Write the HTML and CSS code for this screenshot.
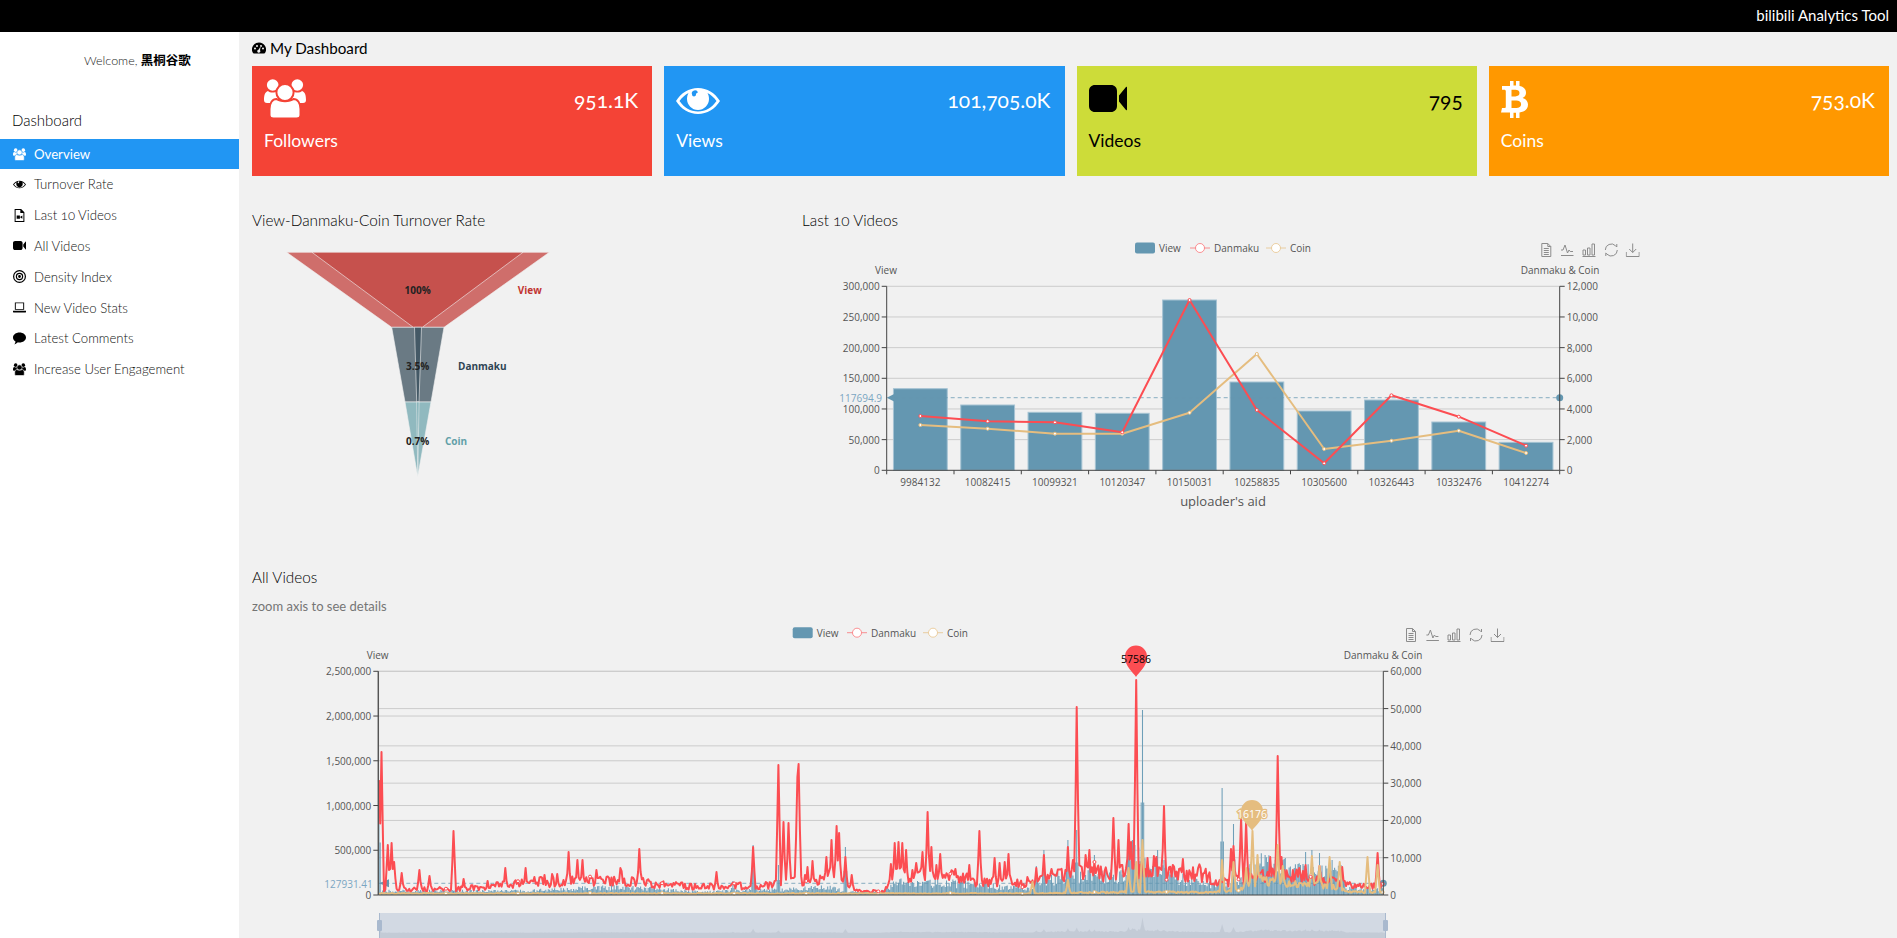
FILE: index.html
```html
<!DOCTYPE html>
<html lang="en">
<head>
  <meta charset="UTF-8">
  <title>bilibili Analytics Tool</title>
  <link rel="stylesheet" href="styles.css">
</head>
<body>
  <svg class="icon-defs" width="0" height="0">
    <symbol id="i-users" viewBox="0 0 42 40">
      <circle cx="8.7" cy="6" r="5.8"/>
      <circle cx="33.3" cy="6" r="5.8"/>
      <path d="M0 21c0-5 1-8 4-9 2 2 7 2 9 0l6 3-9 9H3c-2 0-3-1-3-3zM42 21c0-5-1-8-4-9-2 2-7 2-9 0l-6 3 9 9h7c2 0 3-1 3-3z"/>
      <circle class="gap" cx="21" cy="13.5" r="8.6"/>
      <path class="gap" d="M5.5 36V30c0-6 3-10 7-10 4 3 13 3 17 0 4 0 7 4 7 10v6c0 2-2 3.5-4 3.5H9.500c-2 0-4-1.500-4-3.500z"/>
    </symbol>
    <symbol id="i-eye" viewBox="0 0 44 26">
      <path fill-rule="evenodd" d="M0 13C5 5 13 0 22 0s17 5 22 13c-5 8-13 13-22 13S5 21 0 13zm3.500 0C8 19.500 14.500 23.500 22 23.500S36 19.500 40.500 13C38 9.500 35 7 31.500 5c1 1.800 1.500 3.800 1.500 6 0 6-5 11-11 11s-11-5-11-11c0-2.200.5-4.200 1.500-6C9 7 6 9.500 3.500 13zM22 4.500a2 2 0 0 0-6 2 2 2 0 0 0 4 0c0-1 .8-2 2-2z"/>
    </symbol>
    <symbol id="i-video" viewBox="0 0 38 27">
      <path d="M6 0h16c3.500 0 6 2.500 6 6v15c0 3.500-2.500 6-6 6H6c-3.500 0-6-2.500-6-6V6c0-3.500 2.500-6 6-6zM30 10.500 37 2c.5-.5 1-.3 1 .5v22c0 .8-.5 1-1 .5l-7-8.500z"/>
    </symbol>
    <symbol id="i-file" viewBox="0 0 12 16">
      <path fill-rule="evenodd" d="M0 0h8l4 4v12H0zM1.200 1.200v13.600h9.600V5H7V1.200zM2.500 8h4v4h-4zM7 9.500 9.500 8v4L7 10.500z"/>
    </symbol>
    <symbol id="i-target" viewBox="0 0 14 14">
      <path fill-rule="evenodd" d="M7 0a7 7 0 1 1 0 14A7 7 0 0 1 7 0zm0 1.300a5.700 5.700 0 1 0 0 11.400A5.700 5.700 0 0 0 7 1.300zm0 1.700a4 4 0 1 1 0 8 4 4 0 0 1 0-8zm0 1.300a2.700 2.700 0 1 0 0 5.400 2.700 2.700 0 0 0 0-5.400zM7 5.500a1.500 1.500 0 1 1 0 3 1.500 1.500 0 0 1 0-3z"/>
    </symbol>
    <symbol id="i-laptop" viewBox="0 0 14 11">
      <path fill-rule="evenodd" d="M2 0h10v8H2zm1 1v6h8V1zM0 9h14v1c0 .6-.4 1-1 1H1c-.6 0-1-.4-1-1z"/>
    </symbol>
    <symbol id="i-comment" viewBox="0 0 14 13">
      <path d="M7 0c3.900 0 7 2.400 7 5.400s-3.100 5.400-7 5.400c-.6 0-1.200 0-1.700-.2C4.200 11.700 2.800 12.500 1.500 13c.7-1 1.100-2 1.200-3.200C1 8.800 0 7.200 0 5.400 0 2.400 3.100 0 7 0z"/>
    </symbol>
    <symbol id="i-gauge" viewBox="0 0 14 12">
      <path fill-rule="evenodd" d="M7 0a7 7 0 0 1 6 10.600c-.2.300-.5.400-.8.400H1.800c-.3 0-.6-.1-.8-.4A7 7 0 0 1 7 0zM3 5a1 1 0 1 0 0 2 1 1 0 0 0 0-2zm2-2.500a1 1 0 1 0 0 2 1 1 0 0 0 0-2zm4 0a1 1 0 1 0 0 2 1 1 0 0 0 0-2zM11 5a1 1 0 1 0 0 2 1 1 0 0 0 0-2zM8.700 3.800 6.500 7.200a1.500 1.500 0 1 0 1.500.6z"/>
    </symbol>
    <symbol id="i-coin" viewBox="0 0 27 37">
      <path fill-rule="evenodd" d="M9 0h3.500v4.600H15V0h3.500v5c4 .8 6.500 3 6.500 6.700 0 2.400-1.200 4.300-3.400 5.200 3.300.9 5.400 3.200 5.400 6.700 0 4.700-3.300 7.300-8.500 7.900V37H15v-5.300h-2.500V37H9v-5.400H0l1-4.600h2.500c.9 0 1.300-.5 1.300-1.300V10.200c0-1-.6-1.500-1.600-1.500H1V4.900h8zm1.500 8.700v6.700h3.800c2.500 0 4.200-1 4.200-3.300 0-2.400-1.700-3.400-4.200-3.400zm0 10.800v7.400h4.800c2.800 0 4.800-1.200 4.800-3.700s-2-3.700-4.800-3.700z"/>
    </symbol>
    <symbol id="t-data" viewBox="0 0 14 14">
      <path d="M2.500.5h6l3 3v10h-9zM8.500.5v3h3M4.500 5.500h5M4.500 7.500h5M4.500 9.500h5M4.500 11.500h5"/>
    </symbol>
    <symbol id="t-line" viewBox="0 0 14 14">
      <path d="M1 7h2l2-5 2.500 8L9 7l1.200 1.500H13M1 12.500h12.500"/>
    </symbol>
    <symbol id="t-bar" viewBox="0 0 14 14">
      <path d="M1 7h2.500v5H1zM5.500 5H8v7H5.500zM10 1h2.500v11H10zM.5 13.500h13"/>
    </symbol>
    <symbol id="t-restore" viewBox="0 0 14 14">
      <path d="M1 7a6 6 0 0 1 10.300-4.200L12.500 4V1M13 7A6 6 0 0 1 2.700 11.200L1.500 10v3"/>
    </symbol>
    <symbol id="t-save" viewBox="0 0 14 14">
      <path d="M7 .5v9M3.500 6 7 9.500 10.500 6M.5 9v4.500h13V9"/>
    </symbol>
  </svg>

  <div class="topbar">bilibili Analytics Tool</div>

  <div class="layout">
    <aside class="sidebar">
      <div class="welcome">Welcome, <strong>黑桐谷歌</strong></div>
      <h5 class="side-title">Dashboard</h5>
      <nav class="side-nav">
        <a class="active" href="#"><svg class="nav-icon"><use href="#i-users"/></svg>Overview</a>
        <a href="#"><svg class="nav-icon"><use href="#i-eye"/></svg>Turnover Rate</a>
        <a href="#"><svg class="nav-icon"><use href="#i-file"/></svg>Last 10 Videos</a>
        <a href="#"><svg class="nav-icon"><use href="#i-video"/></svg>All Videos</a>
        <a href="#"><svg class="nav-icon"><use href="#i-target"/></svg>Density Index</a>
        <a href="#"><svg class="nav-icon"><use href="#i-laptop"/></svg>New Video Stats</a>
        <a href="#"><svg class="nav-icon"><use href="#i-comment"/></svg>Latest Comments</a>
        <a href="#"><svg class="nav-icon"><use href="#i-users"/></svg>Increase User Engagement</a>
      </nav>
    </aside>

    <main class="content">
      <h5 class="page-title"><svg class="title-icon"><use href="#i-gauge"/></svg>My Dashboard</h5>

      <div class="cards">
        <div class="card card-red">
          <div class="card-top"><svg class="card-icon icon-users"><use href="#i-users"/></svg><span class="card-num">951.1K</span></div>
          <div class="card-label">Followers</div>
        </div>
        <div class="card card-blue">
          <div class="card-top"><svg class="card-icon icon-eye"><use href="#i-eye"/></svg><span class="card-num">101,705.0K</span></div>
          <div class="card-label">Views</div>
        </div>
        <div class="card card-lime">
          <div class="card-top"><svg class="card-icon icon-video"><use href="#i-video"/></svg><span class="card-num">795</span></div>
          <div class="card-label">Videos</div>
        </div>
        <div class="card card-orange">
          <div class="card-top"><svg class="card-icon icon-coin"><use href="#i-coin"/></svg><span class="card-num">753.0K</span></div>
          <div class="card-label">Coins</div>
        </div>
      </div>

      <div class="chart-row">
        <section class="col-funnel">
          <h5 class="section-title">View-Danmaku-Coin Turnover Rate</h5>
          <svg class="chart funnel-chart" viewBox="252 235 550 285">
            <polygon class="fn-view-o" points="286.700,252.300 549.300,252.300 444,327.300 391.700,327.300"/>
            <polygon class="fn-view-i" points="312,252.300 523,252.300 422.300,327.300 413.300,327.300"/>
            <polygon class="fn-dan-o" points="391.700,327.300 444,327.300 431,402 405,402"/>
            <polygon class="fn-dan-i" points="414.500,327.300 421.500,327.300 419,402 416.700,402"/>
            <polygon class="fn-coin-o" points="405,402 431,402 417.700,476.700"/>
            <polygon class="fn-coin-i" points="416.700,402 419,402 417.800,476.700"/>
            <text class="fn-num" x="417.700" y="290">100%</text>
            <text class="fn-num" x="417.700" y="366">3.5%</text>
            <text class="fn-num" x="417.700" y="441">0.7%</text>
            <text class="fn-label lbl-view" x="517.700" y="290">View</text>
            <text class="fn-label lbl-dan" x="458" y="366">Danmaku</text>
            <text class="fn-label lbl-coin" x="445" y="441">Coin</text>
          </svg>
        </section>
        <section class="col-bars">
          <h5 class="section-title">Last 10 Videos</h5>
          <svg class="chart bar-chart" id="barChart" viewBox="802 235 1087 285"></svg>
        </section>
      </div>

      <section class="all-videos">
        <h5 class="section-title">All Videos</h5>
        <p class="section-note">zoom axis to see details</p>
        <svg class="chart big-chart" id="bigChart" viewBox="252 620 1637 318"></svg>
      </section>
    </main>
  </div>

  <script src="charts.js"></script>
</body>
</html>
```

FILE: styles.css
```css
* { margin: 0; padding: 0; box-sizing: border-box; }
html, body { height: 100%; overflow: hidden; }
body {
  font-family: Lato, "Noto Sans CJK SC", sans-serif;
  font-variant-numeric: oldstyle-nums;
  font-weight: 300;
  background: #f1f1f1;
  color: #000;
}
.icon-defs { position: absolute; }

.topbar {
  height: 32px;
  line-height: 30px;
  background: #000;
  color: #fff;
  text-align: right;
  padding-right: 8px;
  font-size: 15px;
  font-weight: 400;
}

.layout { display: flex; height: calc(100% - 32px); }

.sidebar {
  width: 239px;
  flex: none;
  background: #fff;
  --gap: #fff;
}
.welcome {
  height: 56px;
  padding: 18px 0 0 84px;
  font-size: 12.500px;
  line-height: 20px;
  color: #222;
}
.welcome strong { color: #000; font-size: 12.500px; font-weight: 700; font-family: "Noto Sans CJK SC", sans-serif; }
.side-title {
  height: 51px;
  padding: 22px 0 0 12px;
  font-size: 15px;
  line-height: 20px;
  font-weight: 300;
  color: #000;
}
.side-nav a {
  display: flex;
  align-items: center;
  height: 30.800px;
  padding-left: 13px;
  color: #111;
  text-decoration: none;
  font-size: 13.200px;
}
.side-nav a.active { background: #2196f3; color: #fff; --gap: #2196f3; height: 30px; font-weight: 400; }
.nav-icon { width: 13px; height: 13px; margin-right: 8px; fill: #000; flex: none; }
.active .nav-icon { fill: #fff; }
.gap { stroke: var(--gap); stroke-width: 2; }

.content { flex: 1; min-width: 0; padding: 0 8px 0 13px; overflow: hidden; }

.page-title {
  display: flex;
  align-items: center;
  height: 34px;
  padding-bottom: 2px;
  font-size: 15.200px;
  font-weight: 400;
}
.title-icon { width: 14px; height: 13px; margin-right: 4px; fill: #000; }

.cards { display: grid; grid-template-columns: repeat(4, 1fr); gap: 12px; }
.card { height: 110px; padding: 13px 14px 0 12px; color: #fff; --gap: #f44336; }
.card-red { background: #f44336; }
.card-blue { background: #2196f3; --gap: #2196f3; }
.card-lime { background: #cddc39; color: #000; --gap: #cddc39; }
.card-orange { background: #ff9800; --gap: #ff9800; }
.card-top { display: flex; justify-content: space-between; align-items: flex-start; height: 44px; }
.card-icon { fill: currentColor; display: block; }
.icon-users { width: 42px; height: 40px; }
.icon-eye { width: 44px; height: 26px; margin-top: 9px; }
.icon-video { width: 38px; height: 27px; margin-top: 6px; }
.icon-coin { width: 27px; height: 37px; margin-top: 2px; }
.card-num { font-size: 21px; line-height: 26px; margin-top: 8px; font-weight: 400; }
.card-label { font-size: 17.500px; line-height: 24px; margin-top: 6px; font-weight: 400; }

.chart-row { display: flex; margin-top: 34px; }
.col-funnel { width: 550px; flex: none; }
.col-bars { flex: 1; min-width: 0; }
.section-title { font-size: 15.300px; line-height: 20px; font-weight: 300; color: #000; height: 25px; }
.chart { display: block; font-variant-numeric: normal; }
.funnel-chart { width: 550px; height: 285px; }
.bar-chart { width: 1087px; height: 285px; }

.all-videos { margin-top: 47px; }
.all-videos .section-title { height: 20px; }
.section-note { font-size: 13px; line-height: 18px; margin-top: 10px; color: #757575; height: 23px; font-weight: 400; }
.big-chart { width: 1637px; height: 318px; }

/* funnel */
.funnel-chart polygon { stroke: #f1f1f1; stroke-width: 1; stroke-opacity: .6; }
.fn-view-o { fill: #cf6e6b; }
.fn-view-i { fill: #c6514d; }
.fn-dan-o { fill: #6a7a84; }
.fn-dan-i { fill: #445966; }
.fn-coin-o { fill: #90b9bf; }
.fn-coin-i { fill: #79acb3; }
.fn-num { font: 700 10px "Open Sans", sans-serif; fill: #222; text-anchor: middle; dominant-baseline: central; }
.fn-label { font: 700 10px "Open Sans", sans-serif; dominant-baseline: central; }
.lbl-view { fill: #c23531; }
.lbl-dan { fill: #2f4554; }
.lbl-coin { fill: #61a0a8; }

/* shared chart parts */
.chart text { font-family: "Open Sans", sans-serif; font-variant-numeric: lining-nums; font-weight: 400; }
.chart .fn-num, .chart .fn-label { font-weight: 700; }
.tick { font-size: 10px; fill: #555; dominant-baseline: central; }
.t-end { text-anchor: end; }
.t-mid { text-anchor: middle; }
.axis-name { font-size: 10px; fill: #555; text-anchor: middle; dominant-baseline: central; }
.x-name { font-size: 13px; fill: #555; text-anchor: middle; dominant-baseline: central; }
.legend-text { font-size: 10px; fill: #555; dominant-baseline: central; }
.mean-label { font-size: 10px; fill: #7ba6c2; text-anchor: end; dominant-baseline: central; }
.grid-line { stroke: #ccc; stroke-width: 1; }
.axis-line { stroke: #444; stroke-width: 1; fill: none; }
.axis-thick { stroke: #999; stroke-width: 1.500; }
.mean-line { stroke: #6497b1; stroke-width: 1; stroke-dasharray: 4 3; opacity: .75; }
.mean-dot { fill: #6497b1; }
.bars { fill: #6497b1; stroke: #a5c3d3; stroke-width: 1; }
.thin-bars { stroke: #6e9fb8; stroke-width: 1.050; fill: none; }
.red-line { stroke: #fc4d52; stroke-width: 2; fill: none; stroke-linejoin: round; }
.coin-line { stroke: #e5bd7f; stroke-width: 2; fill: none; stroke-linejoin: round; }
.red-dot { fill: #fff; stroke: #fc4d52; }
.coin-dot { fill: #fff; stroke: #e5bd7f; }
.legend-rect { fill: #6497b1; }
.legend-red { stroke: #fc4d52; fill: none; opacity: .6; }
.legend-coin { stroke: #e5bd7f; fill: none; opacity: .7; }
.legend-disc { fill: #fff; }
.tool { fill: none; stroke: #8c8c8c; stroke-width: 1; }

.pin-red { fill: #fc4d52; }
.pin-coin { fill: #e5bd7f; }
.pin-text { font-size: 10.500px; text-anchor: middle; dominant-baseline: central; }
.pin-text-dark { fill: #000; }
.pin-text-light { fill: #fff; stroke: #e5bd7f; stroke-width: 2.500px; paint-order: stroke; }

.slider-bg { fill: #d2d9e3; }
.slider-shadow { fill: #c3cbd6; }
.slider-handle { fill: #a9b9ce; }
.slider-edge { stroke: #a9b9ce; stroke-width: 1; }
```

FILE: charts.js
```js
// chart drawing, all coordinates are page pixels (see the viewBox of each svg)
function legend(y, o) {
  let s = `<rect class="legend-rect" x="${o.rect}" y="${y - 5.5}" width="20" height="11" rx="2"/>`;
  s += `<text class="legend-text" x="${o.rect + 24}" y="${y}">View</text>`;
  s += legendLine(o.red, y, 'legend-red') + `<text class="legend-text" x="${o.red + 24}" y="${y}">Danmaku</text>`;
  s += legendLine(o.coin, y, 'legend-coin') + `<text class="legend-text" x="${o.coin + 24}" y="${y}">Coin</text>`;
  return s;
}

function legendLine(x, y, cls) {
  return `<path class="${cls}" d="M${x} ${y}h20"/><circle class="legend-disc" cx="${x + 10}" cy="${y}" r="4.500"/><circle class="${cls}" cx="${x + 10}" cy="${y}" r="4.500"/>`;
}

function toolbox(xs, y) {
  const names = ['t-data', 't-line', 't-bar', 't-restore', 't-save'];
  return names.map((n, i) => `<use class="tool" href="#${n}" x="${xs[i] - 7}" y="${y - 7}" width="14" height="14"/>`).join('');
}

function fmt(n) {
  return n.toLocaleString('en-US');
}

function yAxis(x, yTop, yBottom, max, steps, side) {
  let s = `<path class="axis-line" d="M${x} ${yTop}V${yBottom}"/>`;
  for (let i = 0; i <= steps; i++) {
    const y = yBottom - (yBottom - yTop) * i / steps;
    const v = fmt(max * i / steps);
    if (side === 'left') {
      s += `<path class="axis-line" d="M${x - 5} ${y}h5"/><text class="tick t-end" x="${x - 7}" y="${y}">${v}</text>`;
    } else {
      s += `<path class="axis-line" d="M${x} ${y}h5"/><text class="tick" x="${x + 7}" y="${y}">${v}</text>`;
    }
  }
  return s;
}

function gridLines(x1, x2, yTop, yBottom, steps) {
  let s = '';
  for (let i = 1; i <= steps; i++) {
    const y = yBottom - (yBottom - yTop) * i / steps;
    s += `<path class="grid-line" d="M${x1} ${y}H${x2}"/>`;
  }
  return s;
}

function poly(pts, cls) {
  return `<polyline class="${cls}" points="${pts.map(p => p[0].toFixed(1) + ',' + p[1].toFixed(1)).join(' ')}"/>`;
}

function drawBarChart() {
  const left = 886.7, right = 1559.7, top = 286.3, bottom = 470.3;
  const step = (right - left) / 10;
  const ids = ['9984132', '10082415', '10099321', '10120347', '10150031', '10258835', '10305600', '10326443', '10332476', '10412274'];
  const barTop = [388.7, 405, 412.3, 413.3, 300, 382, 411, 400, 422, 442.3];
  const red = [416, 421.3, 422.3, 432.3, 300, 410, 463.3, 395.3, 416.7, 445.7];
  const coin = [425, 428.7, 433.7, 433.7, 412.7, 354, 449, 440.7, 430.7, 453];
  const cx = i => left + step * (i + 0.5);

  let s = legend(248, { rect: 1135, red: 1190, coin: 1266 });
  s += toolbox([1546.3, 1567, 1589, 1611.3, 1632.7], 250);
  s += `<text class="axis-name" x="886" y="269.700">View</text><text class="axis-name" x="1560" y="269.700">Danmaku &amp; Coin</text>`;
  s += gridLines(left, right, top, bottom, 6);
  barTop.forEach((t, i) => {
    s += `<rect class="bars" x="${cx(i) - 26.900}" y="${t}" width="53.800" height="${bottom - t}"/>`;
  });
  s += `<path class="mean-line" d="M${left + 8} 397.700H${right}"/>`;
  s += `<path class="mean-dot" d="M${left} 397.700l8-4v8z"/><circle class="mean-dot" cx="${right}" cy="397.700" r="3.500"/>`;
  s += `<text class="mean-label" x="882" y="398">117694.9</text>`;
  s += poly(coin.map((y, i) => [cx(i), y]), 'coin-line') + poly(red.map((y, i) => [cx(i), y]), 'red-line');
  coin.forEach((y, i) => { s += `<circle class="coin-dot" cx="${cx(i)}" cy="${y}" r="1.500"/>`; });
  red.forEach((y, i) => { s += `<circle class="red-dot" cx="${cx(i)}" cy="${y}" r="1.500"/>`; });
  s += `<path class="axis-line" d="M${left} ${bottom}H${right}"/>`;
  ids.forEach((id, i) => {
    s += `<path class="axis-line" d="M${left + step * i} ${bottom}v4"/><text class="tick t-mid" x="${cx(i)}" y="481.700">${id}</text>`;
  });
  s += `<path class="axis-line" d="M${right} ${bottom}v4"/>`;
  s += yAxis(left, top, bottom, 300000, 6, 'left') + yAxis(right, top, bottom, 12000, 6, 'right');
  s += `<text class="x-name" x="1223" y="500.700">uploader's aid</text>`;
  document.getElementById('barChart').innerHTML = s;
}

// small seeded random so every render is the same
function seeded(a) {
  return function () {
    a = (a + 0x6D2B79F5) | 0;
    let t = Math.imul(a ^ (a >>> 15), 1 | a);
    t = (t + Math.imul(t ^ (t >>> 7), 61 | t)) ^ t;
    return ((t ^ (t >>> 14)) >>> 0) / 4294967296;
  };
}

function lerpTable(table, x) {
  for (let i = 1; i < table.length; i++) {
    if (x <= table[i][0]) {
      const a = table[i - 1], b = table[i];
      return a[1] + (b[1] - a[1]) * (x - a[0]) / (b[0] - a[0]);
    }
  }
  return table[table.length - 1][1];
}

function drawBigChart() {
  const left = 378.3, right = 1383.3, top = 671.3, bottom = 895;
  const count = 795;
  const step = (right - left) / count;
  const rnd = seeded(795);

  // traced [x, y] peaks of the danmaku line
  const redPeaks = [[378.500, 780], [382, 752], [388, 845], [392, 843], [394, 862], [402, 873], [419, 870], [430, 876], [453, 831], [463, 879], [488, 881], [505, 868], [525, 868], [535, 877], [545, 875], [552, 874], [557, 874], [569, 852], [578, 860], [583, 860], [596, 870], [607, 877], [620, 868], [622, 871], [639, 849], [674, 883], [716, 872], [753, 847], [778, 765], [783, 822], [788, 823], [797, 777], [799, 764], [807, 867], [813, 861], [826, 857], [832, 840], [836, 826], [839, 833], [846, 857], [852, 875], [891, 864], [895, 843], [899, 842], [902, 843], [906, 850], [912, 870], [916, 863], [923, 852], [927, 812], [931, 847], [936, 865], [940, 854], [969, 865], [979, 831], [994, 858], [1000, 863], [1005, 862], [1009, 854], [1027, 877], [1036, 868], [1044, 855], [1068, 847], [1073, 860], [1077, 707], [1085, 855], [1090, 850], [1095, 862], [1113, 818], [1119, 840], [1128, 824], [1131, 842], [1136, 680], [1143, 860], [1147, 858], [1154, 856], [1157, 857], [1164, 806], [1183, 859], [1193, 871], [1204, 873], [1231, 849], [1234, 846], [1241, 818], [1246, 822], [1270, 857], [1278, 756], [1282, 857], [1295, 875], [1305, 865], [1320, 866], [1342, 867], [1377, 853]];
  // traced [x, y] spikes of the view bars
  const barPeaks = [[378.500, 790], [733, 881], [753, 845], [778, 865], [846, 847], [1036, 866], [1044, 850], [1068, 840], [1077, 830], [1090, 852], [1094, 855], [1128, 823], [1132, 840], [1135, 845], [1142, 710], [1158, 850], [1164, 860], [1222, 788], [1234, 824], [1305, 852], [1312, 850], [1320, 853], [1332, 860]];
  const coinPeaks = [[1032, 882], [1068, 880], [1128, 868], [1136, 862], [1142, 840], [1222, 860], [1234, 862], [1246, 868], [1253, 831], [1258, 855], [1278, 845], [1283, 866], [1312, 856], [1320, 866], [1330, 857], [1340, 862], [1367, 857], [1377, 865]];

  // height over the axis between the peaks
  const redBase = [[378, 5], [460, 6], [540, 13], [620, 14], [700, 8], [770, 10], [830, 18], [852, 5], [882, 3], [900, 20], [960, 20], [975, 13], [1030, 11], [1060, 22], [1130, 22], [1200, 22], [1225, 12], [1240, 18], [1300, 20], [1340, 11], [1383, 8]];
  const barBase = [[378, 4], [530, 4], [620, 8], [700, 3], [830, 7], [850, 3], [880, 3], [900, 13], [960, 11], [1030, 6], [1060, 18], [1125, 18], [1135, 36], [1180, 16], [1220, 9], [1240, 12], [1260, 34], [1300, 24], [1342, 22], [1346, 7], [1383, 6]];
  const coinBase = [[378, 1.500], [1030, 1.500], [1130, 3], [1210, 2.500], [1240, 5], [1260, 15], [1290, 11], [1340, 8], [1346, 3], [1383, 3]];

  function series(base, peaks, jitter) {
    const out = [];
    const heights = [];
    for (let i = 0; i < count; i++) {
      const x = left + step * (i + 0.5);
      heights.push(lerpTable(base, x) * (1 - jitter + 2 * jitter * rnd()));
      out.push(x);
    }
    // each peak sits on its nearest sample, with half height next to it
    peaks.forEach(p => {
      const at = Math.max(0, Math.round((p[0] - left) / step - 0.5));
      const h = bottom - p[1];
      heights[at] = Math.max(heights[at], h);
      if (at > 0) heights[at - 1] = Math.max(heights[at - 1], h * 0.5);
      if (at < count - 1) heights[at + 1] = Math.max(heights[at + 1], h * 0.5);
    });
    return out.map((x, i) => [x, bottom - heights[i]]);
  }

  const bars = series(barBase, barPeaks, 0.4);
  const red = series(redBase, redPeaks, 0.4);
  const coin = series(coinBase, coinPeaks, 0.35);

  let s = legend(632.700, { rect: 792.700, red: 847, coin: 923 });
  s += toolbox([1411, 1432.400, 1454, 1476, 1497.500], 635);
  s += `<text class="axis-name" x="377.700" y="654.700">View</text><text class="axis-name" x="1383" y="654.700">Danmaku &amp; Coin</text>`;
  s += gridLines(left, right, top, bottom, 5) + gridLines(left, right, top, bottom, 6);
  s += `<path class="thin-bars" d="${bars.map(p => `M${p[0].toFixed(1)} ${bottom}V${p[1].toFixed(1)}`).join('')}"/>`;
  s += `<path class="mean-line" d="M${left} 883.300H${right}"/>`;
  s += `<path class="mean-dot" d="M379 883.300l10-4v8z"/><circle class="mean-dot" cx="${right}" cy="883.300" r="3.500"/>`;
  s += `<text class="mean-label" x="372.700" y="884">127931.41</text>`;
  s += poly(red, 'red-line') + poly(coin, 'coin-line');
  for (let i = 53; i < count; i += 57) {
    s += `<circle class="coin-dot" cx="${coin[i][0]}" cy="${coin[i][1]}" r="1.500"/>`;
    s += `<circle class="red-dot" cx="${red[i][0]}" cy="${red[i][1]}" r="1.500"/>`;
  }
  s += `<path class="axis-line" d="M${left} ${bottom}H${right}"/>`;
  s += `<path class="axis-thick" d="M${left} ${top}V${bottom}"/>`;
  s += yAxis(left, top, bottom, 2500000, 5, 'left') + yAxis(right, top, bottom, 60000, 6, 'right');

  // mark points
  s += `<path class="pin-red" d="M1136 677c-3-5-11-10-11-20.500a11 11 0 0 1 22 0c0 10.500-8 15.500-11 20.500z"/><text class="pin-text pin-text-dark" x="1136" y="659">57586</text>`;
  s += `<path class="pin-coin" d="M1252 830.700c-3-5-11-9.500-11-19.700a11 11 0 0 1 22 0c0 10.200-8 14.700-11 19.700z"/><text class="pin-text pin-text-light" x="1252" y="813.500">16176</text>`;

  // data zoom slider
  s += `<rect class="slider-bg" x="379" y="913" width="1006.700" height="25"/>`;
  const shade = bars.map(p => [p[0], 933 - (bottom - p[1]) * 0.085]);
  s += `<path class="slider-shadow" d="M379 938V933L${shade.map(p => p[0].toFixed(1) + ' ' + p[1].toFixed(1)).join('L')}L1385 933V938z"/>`;
  s += `<path class="slider-edge" d="M379.500 913V938M1385.500 913V938"/>`;
  s += `<rect class="slider-handle" x="377" y="920" width="5" height="11" rx="1"/><rect class="slider-handle" x="1383" y="920" width="5" height="11" rx="1"/>`;
  document.getElementById('bigChart').innerHTML = s;
}

drawBarChart();
drawBigChart();
```
